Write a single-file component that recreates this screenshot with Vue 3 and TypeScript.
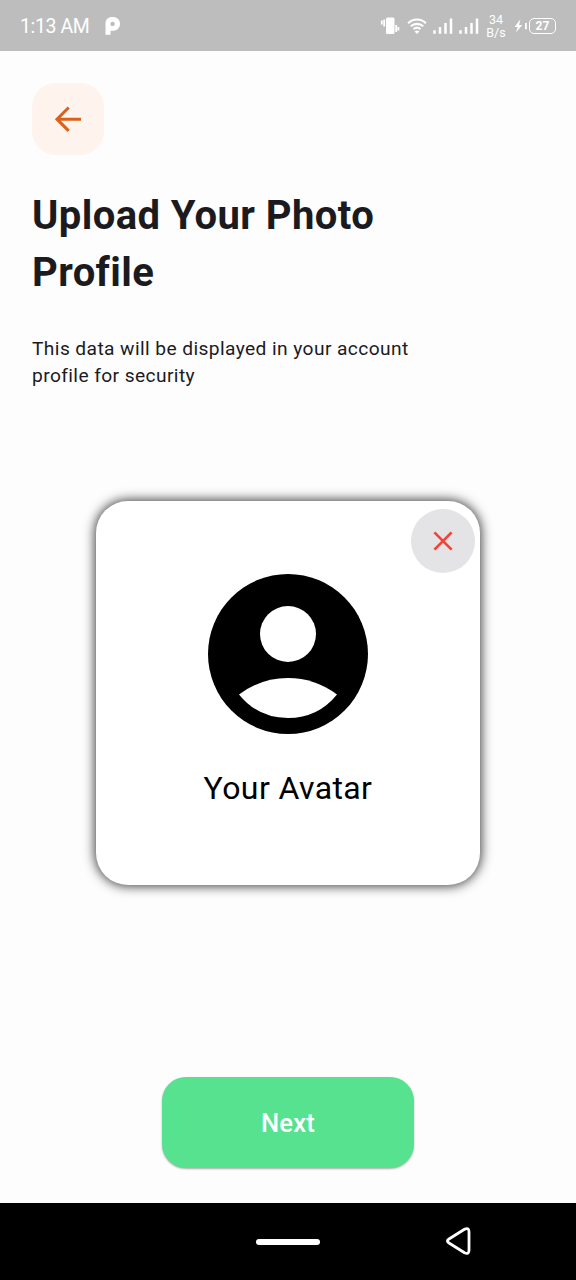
<script setup lang="ts">
const title: string = 'Upload Your Photo Profile'
const description: string = 'This data will be displayed in your account profile for security'
const signals: string[] = ['sim-1', 'sim-2']
</script>

<template>
  <div class="screen">
    <header class="status">
      <span class="time">1:13 AM</span>
      <svg class="app-icon" width="16" height="20" viewBox="0 0 16 20">
        <path fill="#fff" fill-rule="evenodd" d="M.5 8C.5 3.200 3 1 7.500 1S15 3.500 15 7.800 12 14.800 8 14.800H5.500V18.800H.5ZM7.600 5.700a2.200 2.200 0 1 0 0 4.400 2.200 2.200 0 0 0 0-4.400Z" />
      </svg>
      <div class="indicators">
        <svg class="vibrate" width="20" height="20" viewBox="0 0 20 20">
          <rect x="6" y="1.500" width="8.500" height="16.500" rx="1.500" fill="#fff" />
          <path d="M4.200 3.500v7M1.800 4.500v4M16.200 9v7M18.400 11v3.500" stroke="#fff" stroke-width="1.800" />
        </svg>
        <svg class="wifi" width="20" height="18" viewBox="0 0 20 18">
          <path d="M1.100 6.200C6.200 1.200 13.800 1.200 18.900 6.200M3.800 9.300c3.600-3.300 8.800-3.300 12.400 0M6.500 12.200c2.100-1.800 4.900-1.800 7 0" fill="none" stroke="#fff" stroke-width="2.100" />
          <path d="M7.600 14.400q2.400-1.600 4.800 0L10 17Z" fill="#fff" />
        </svg>
        <svg v-for="s in signals" :key="s" class="signal" width="20" height="18" viewBox="0 0 20 18">
          <path d="M1.500 13.200v3.500M7 10v6.700M12.500 6v10.700M18 1.500v15.200" stroke="#fff" stroke-width="2.500" />
        </svg>
        <div class="speed"><span>34</span><span>B/s</span></div>
        <svg class="bolt" width="14" height="16" viewBox="0 0 14 16">
          <path d="M6.500 1.300.500 9h3.200L2 14.500 8.200 7H5ZM11 5h1.800v6.200h-1.800Z" fill="#fff" />
        </svg>
        <div class="battery">27</div>
      </div>
    </header>

    <main class="content">
      <button class="back" aria-label="Back">
        <svg width="38.400" height="38.400" viewBox="0 0 24 24">
          <path d="M20 12H5.200M12.300 4.700 5 12l7.300 7.300" fill="none" stroke="#d9611b" stroke-width="1.900" />
        </svg>
      </button>
      <h1 class="title">{{ title }}</h1>
      <p class="description">{{ description }}</p>

      <section class="card">
        <button class="remove" aria-label="Remove">
          <svg width="20" height="20" viewBox="0 0 20 20">
            <path d="m1.400 1.400 17.200 17.200M18.600 1.400 1.400 18.600" stroke="#f44336" stroke-width="2.700" />
          </svg>
        </button>
        <svg class="avatar" width="160" height="160" viewBox="0 0 160 160">
          <circle cx="80" cy="80" r="80" />
          <circle cx="80" cy="60" r="28" fill="#fff" />
          <path d="M31 120.500Q53 104 80 104T129 120.500Q110 144 80 144T31 120.500Z" fill="#fff" />
        </svg>
        <p class="caption">Your Avatar</p>
      </section>

      <button class="next">Next</button>
    </main>

    <nav class="navbar">
      <span class="home"></span>
      <svg class="nav-back" width="28" height="30" viewBox="0 0 28 30">
        <path d="M4 13 19.500 3.300Q23.800 1.300 24 5.500v19q-.2 4.200-4.500 2.200L4 17Q.8 15 4 13Z" fill="none" stroke="#fff" stroke-width="2.800" stroke-linejoin="round" />
      </svg>
    </nav>
  </div>
</template>

<style>
body {
  margin: 0;
}
</style>

<style scoped>
.screen {
  width: 576px;
  height: 1280px;
  display: flex;
  flex-direction: column;
  background: #fdfdfd;
  font-family: Roboto, sans-serif;
  overflow: hidden;
}
button {
  border: 0;
  padding: 0;
  font-family: inherit;
}
svg {
  display: block;
  flex: none;
}
.status {
  height: 51px;
  flex: none;
  box-sizing: border-box;
  padding: 0 20px;
  display: flex;
  align-items: center;
  background: #bdbdbd;
  color: #fff;
}
.time {
  width: 70px;
  white-space: nowrap;
  font-size: 19.500px;
  line-height: 24px;
  letter-spacing: -0.400px;
  margin-top: 2px;
}
.app-icon {
  margin-left: 15px;
}
.indicators {
  margin-left: auto;
  display: flex;
  align-items: center;
}
.wifi {
  margin-left: 7px;
}
.signal {
  margin-left: 6px;
}
.speed {
  width: 22px;
  margin-left: 6px;
  display: flex;
  flex-direction: column;
  align-items: center;
  font-size: 12.500px;
  line-height: 13px;
  margin-top: 1px;
}
.bolt {
  margin-left: 7px;
}
.battery {
  width: 27px;
  height: 16px;
  margin-left: 1px;
  box-sizing: border-box;
  border: 1.500px solid #fff;
  border-radius: 5px;
  text-align: center;
  font-size: 12px;
  font-weight: 700;
  line-height: 14px;
}
.content {
  flex: 1;
  display: flex;
  flex-direction: column;
  align-items: flex-start;
  padding: 32px 32px 0;
}
.back {
  width: 72px;
  height: 72px;
  border-radius: 24px;
  background: #fef4ed;
  display: flex;
  align-items: center;
  justify-content: center;
}
.title {
  width: 400px;
  margin: 32px 0 0;
  font-size: 40px;
  line-height: 57px;
  font-weight: 700;
  letter-spacing: 0.400px;
  color: #1b1b1f;
}
.description {
  width: 400px;
  margin: 34px 0 0;
  font-size: 19.200px;
  line-height: 27px;
  letter-spacing: 0.400px;
  color: #1b1b1f;
}
.card {
  position: relative;
  width: 384px;
  height: 384px;
  margin: 112px auto 0;
  border-radius: 32px;
  background: #fff;
  box-shadow: 0 0 12px 1px #000000c8;
  display: flex;
  flex-direction: column;
  align-items: center;
}
.remove {
  position: absolute;
  top: 8px;
  right: 5px;
  width: 64px;
  height: 64px;
  border-radius: 50%;
  background: #e4e4e7;
  display: flex;
  align-items: center;
  justify-content: center;
}
.avatar {
  margin-top: 72.600px;
}
.caption {
  margin: 32px 0 0;
  font-size: 32px;
  line-height: 45px;
  letter-spacing: 0.400px;
  color: #000;
}
.next {
  width: 251.200px;
  height: 91px;
  margin: 192px auto 0;
  border-radius: 24px;
  background: #57e28f;
  color: #fff;
  font-size: 25.600px;
  font-weight: 500;
  letter-spacing: 0.160px;
  box-shadow: 0 1px 2px #00000055;
}
.navbar {
  position: relative;
  height: 77px;
  flex: none;
  display: flex;
  align-items: center;
  justify-content: center;
  background: #000;
}
.home {
  width: 64px;
  height: 6px;
  border-radius: 3px;
  background: #fff;
}
.nav-back {
  position: absolute;
  left: 445px;
  top: 23px;
}
</style>
